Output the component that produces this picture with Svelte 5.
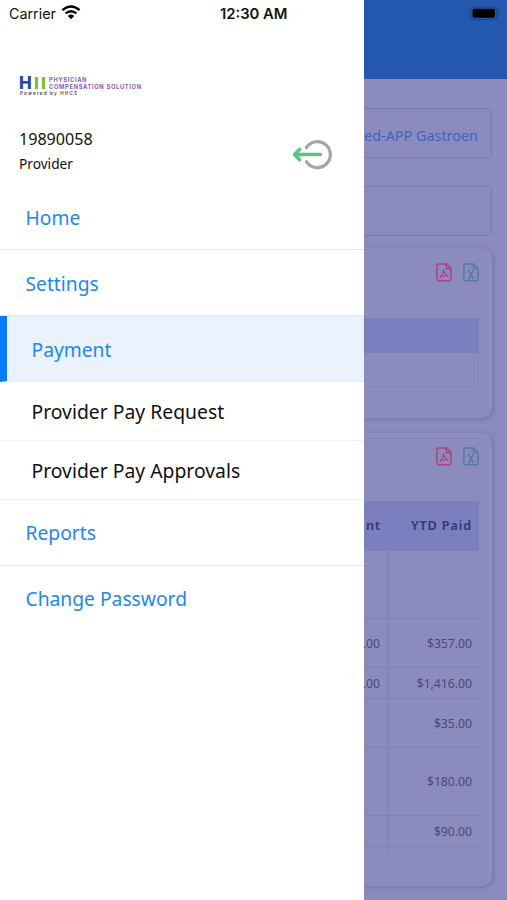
<script lang="ts">
	interface menuItem {
		label: string;
		active?: boolean;
		sub?: boolean;
	}

	let { userId = '19890058', role = 'Provider' } = $props();

	const menu: menuItem[] = [
		{ label: 'Home' },
		{ label: 'Settings' },
		{ label: 'Payment', active: true },
		{ label: 'Provider Pay Request', sub: true },
		{ label: 'Provider Pay Approvals', sub: true },
		{ label: 'Reports' },
		{ label: 'Change Password' }
	];

	const rows = [
		{ amount: '', paid: '', height: 68 },
		{ amount: '.00', paid: '$357.00', height: 49 },
		{ amount: '.00', paid: '$1,416.00', height: 31 },
		{ amount: '', paid: '$35.00', height: 49 },
		{ amount: '', paid: '$180.00', height: 68 },
		{ amount: '', paid: '$90.00', height: 31 },
		{ amount: '', paid: '', height: 8 }
	];
</script>

{#snippet exportIcons()}
	<div class="exports">
		<svg class="pdf" width="16" height="19" viewBox="0 0 16 19">
			<path d="M2.2 1H10.5L15 5.5V16.2Q15 17.8 13.4 17.8H2.4Q.9 17.8.9 16.2V2.4Q.9 1 2.2 1ZM10.3 1V5.7H15" />
			<path class="thin" d="M3.5 14.9Q7 12 7.6 6.6Q8.3 11.6 12.3 13.2Q8 11.9 3.5 14.9" />
		</svg>
		<svg class="xls" width="16" height="19" viewBox="0 0 16 19">
			<path d="M2.2 1H10.5L15 5.5V16.2Q15 17.8 13.4 17.8H2.4Q.9 17.8.9 16.2V2.4Q.9 1 2.2 1ZM10.3 1V5.7H15" />
			<path d="M5.8 8L10.2 15.4M10.2 8L5.8 15.4M4.8 8H7M9 8H11M4.8 15.4H7M9 15.4H11" />
		</svg>
	</div>
{/snippet}

<main>
	<aside>
		<div class="status">
			<span>Carrier</span>
			<svg width="20" height="15" viewBox="0 0 20 15">
				<path d="M1.5 5.2Q10-2.3 18.5 5.2M4.6 8.4Q10 3.9 15.4 8.4" />
				<path class="dot" d="M6.8 10.9Q10 8.2 13.2 10.9L10 14.2Z" />
			</svg>
			<time>12:30 AM</time>
		</div>

		<div class="logo">
			<div class="logo-top">
				<div class="mark">
					<b>H</b>
					<i></i>
					<i></i>
				</div>
				<div class="logo-name">
					<span>PHYSICIAN</span>
					<span>COMPENSATION SOLUTION</span>
				</div>
			</div>
			<div class="powered">Powered by HHCS</div>
		</div>

		<div class="user">
			<div>
				<div class="user-id">{userId}</div>
				<div class="role">{role}</div>
			</div>
			<svg width="41" height="32" viewBox="0 0 41 32">
				<path stroke="#a5a5a5" stroke-width="3.2" d="M14.4 8.6A13 13 0 1 1 14.4 22.6" />
				<path stroke="#60c180" stroke-width="3.4" d="M28.5 15.5H3M7.7 10.2L2.5 15.5L7.7 20.8" />
			</svg>
		</div>

		<nav>
			{#each menu as { label, active, sub }}
				<div class="item" class:active class:sub>{label}</div>
			{/each}
		</nav>
	</aside>

	<section>
		<header>
			<svg width="32" height="16" viewBox="0 0 32 16">
				<rect x=".6" y="1" width="26.5" height="12.5" rx="4" fill="none" stroke="#164582" />
				<rect x="2.5" y="2.8" width="22.5" height="9" rx="2" />
				<path d="M28.5 5.5Q30.3 7.2 28.5 9Z" fill="#164582" />
			</svg>
		</header>

		<div class="field first">ed-APP Gastroen</div>
		<div class="field"></div>

		<div class="card summary">
			{@render exportIcons()}
			<div class="band"></div>
			<div class="blank"></div>
		</div>

		<div class="card payments">
			{@render exportIcons()}
			<div class="row head">
				<span class="amount">nt</span>
				<span class="paid">YTD Paid</span>
			</div>
			{#each rows as { amount, paid, height }}
				<div class="row" style="height: {height}px">
					<span class="amount">{amount}</span>
					<span class="paid">{paid}</span>
				</div>
			{/each}
		</div>
	</section>
</main>

<style>
	:global(body) {
		margin: 0;
	}

	main {
		display: grid;
		grid-template-columns: 364px 1fr;
		width: 507px;
		height: 900px;
		overflow: hidden;
		background: #fff;
		font-family: 'Noto Sans', sans-serif;

		& * {
			box-sizing: border-box;
		}

		& svg {
			display: block;
			flex: none;
		}
	}

	.status {
		display: flex;
		align-items: center;
		height: 27px;
		padding-left: 9px;
		font: 14.3px Inter, sans-serif;
		color: #111;

		& span {
			width: 48px;
		}

		& svg {
			margin-left: 4px;
			margin-top: -2px;
			fill: none;
			stroke: #000;
			stroke-width: 2.4;
		}

		& .dot {
			fill: #000;
			stroke: none;
		}

		& time {
			margin-left: 139px;
			font-weight: 600;
			font-size: 14.8px;
			white-space: nowrap;
		}
	}

	.logo {
		height: 101px;
		padding: 50px 0 0 20px;
		font-family: Inter, sans-serif;

		& .logo-top {
			display: flex;
			gap: 1px;
		}

		& .mark {
			display: flex;
			width: 28px;
			height: 13px;

			& b {
				width: 16px;
				margin-left: -1px;
				font-size: 17px;
				line-height: 13px;
				font-weight: 800;
				color: #2746a8;
			}

			& i {
				width: 3px;
				height: 12px;
				margin: 0 3px 0 1px;
				background: #77c52e;
			}
		}

		& .logo-name {
			display: flex;
			flex-direction: column;
			font-size: 5.8px;
			line-height: 7.3px;
			font-weight: 700;
			letter-spacing: 0.64px;
			white-space: nowrap;
			color: #9259b4;
			margin-top: -1px;
		}

		& .powered {
			font-size: 4.6px;
			line-height: 6px;
			font-weight: 600;
			letter-spacing: 1.18px;
			color: #444;
		}
	}

	.user {
		display: flex;
		justify-content: space-between;
		height: 56px;
		padding: 0 31px 0 19px;
		color: #111;

		& .user-id {
			font-size: 16.1px;
			line-height: 23px;
		}

		& .role {
			font-size: 13.7px;
			line-height: 26px;
		}

		& svg {
			margin-top: 11px;
			fill: none;
			stroke-linecap: round;
			stroke-linejoin: round;
		}
	}

	.item {
		display: flex;
		align-items: center;
		height: 66px;
		padding: 1px 0 0 25.5px;
		border-bottom: 1px solid #e5e8eb;
		font-size: 19.25px;
		color: #2486f0;

		&.active {
			padding-left: 24.5px;
			border-left: 7px solid #087cff;
			background: #eaf2fe;
		}

		&.sub {
			height: 59px;
			padding: 2px 0 0 31.5px;
			border-color: #f2f3f4;
			font-size: 19.35px;
			color: #111;
		}

		&:nth-child(4) {
			height: 58.5px;
		}

		&:last-child {
			padding-top: 0;
			border: none;
		}
	}

	section {
		padding-right: 15px;
		overflow: hidden;
		background: #8c8bbd;
	}

	header {
		display: flex;
		justify-content: flex-end;
		height: 79px;
		margin-right: -15px;
		padding: 6px 5px 0 0;
		background: #2458ae;
	}

	.field {
		display: flex;
		align-items: center;
		justify-content: flex-end;
		height: 50px;
		margin-top: 28px;
		padding: 5px 13px 0 0;
		border: 1px solid #7d7cae;
		border-left: none;
		border-radius: 0 5px 5px 0;
		font-size: 14.4px;
		white-space: nowrap;
		color: #3b64c7;

		&.first {
			margin-top: 29px;
		}
	}

	.card {
		padding: 15px 13px 0 0;
		border-radius: 0 10px 10px 0;
		box-shadow: 1px 1px 5px #706fa6;
	}

	.summary {
		height: 170px;
		margin-top: 12px;

		& .band {
			height: 35px;
			margin-top: 35px;
			background: #7b7fbf;
		}

		& .blank {
			height: 34px;
			border: 1px solid #8584b6;
			border-width: 0 1px 1px 0;
		}
	}

	.payments {
		height: 453px;
		margin-top: 15px;
		padding-top: 14px;

		& .head {
			height: 50px;
			margin-top: 34px;
		}
	}

	.exports {
		display: flex;
		justify-content: flex-end;
		gap: 11px;
		height: 20px;

		& svg {
			fill: none;
			stroke-width: 1.5;
			stroke-linejoin: round;
		}

		& .pdf {
			stroke: #a94382;
		}

		& .xls {
			stroke: #5a7b9e;
		}

		& .thin {
			stroke-width: 1.1;
		}
	}

	.row {
		display: grid;
		grid-template-columns: 24px 91px;
		font-size: 12.2px;
		color: #4a4883;

		& span {
			display: flex;
			align-items: center;
			justify-content: flex-end;
			padding-right: 7px;
			border-bottom: 1px solid #8180b2;
			white-space: nowrap;
		}

		& .amount {
			border-right: 1px solid #8180b2;
		}

		&:last-child span {
			border-bottom: none;
		}

		&.head {
			width: 115px;
			padding-bottom: 2px;
			background: #7b7fbf;
			font-size: 12.6px;
			font-weight: 600;
			letter-spacing: 0.9px;
			color: #37346b;

			& span {
				border: none;
			}
		}
	}
</style>
